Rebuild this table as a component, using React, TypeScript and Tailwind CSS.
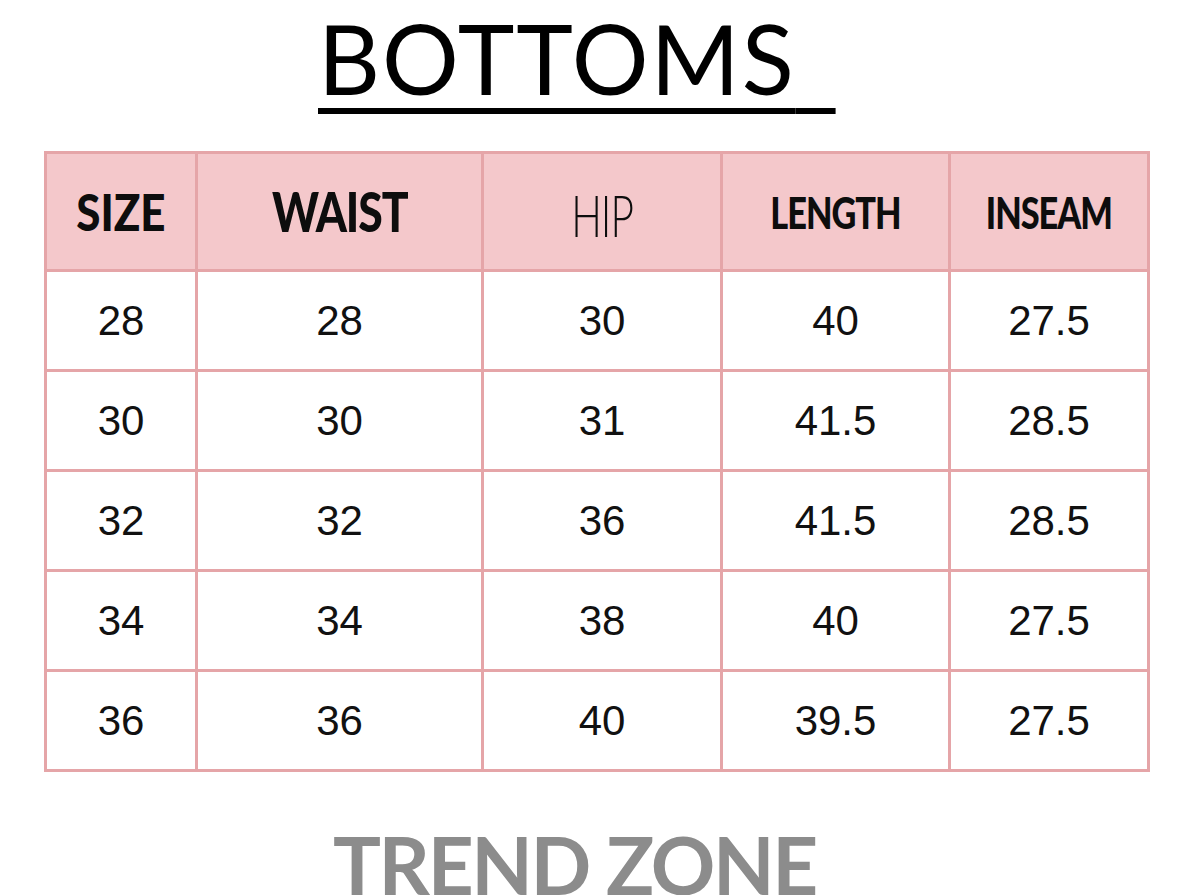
import React from "react";

const rows = [
  ["28", "28", "30", "40", "27.5"],
  ["30", "30", "31", "41.5", "28.5"],
  ["32", "32", "36", "41.5", "28.5"],
  ["34", "34", "38", "40", "27.5"],
  ["36", "36", "40", "39.5", "27.5"],
];

const colWidths = ["w-[151px]", "w-[286px]", "w-[239px]", "w-[228px]", "w-[199px]"];

export default function App() {
  return (
    <div className="w-[1179px] h-[895px] overflow-hidden bg-white flex flex-col">
      {/* Title */}
      <div className="h-[151px] shrink-0 pl-[318px]">
        <h1
          className="text-[96px] leading-[1.2] font-normal tracking-[0.02em] text-black underline decoration-[6px] underline-offset-[13px] whitespace-pre"
          style={{ fontFamily: "Lato, 'Liberation Sans', sans-serif" }}
        >
          BOTTOMS<span className="tracking-[0.16em]">{"\u00a0"}</span>
        </h1>
      </div>

      {/* Size table */}
      <div className="shrink-0 pl-[44px]">
        <table className="border-collapse table-fixed w-[1105px]">
          <colgroup>
            {colWidths.map((w, i) => (
              <col key={i} className={w} />
            ))}
          </colgroup>
          <thead>
            <tr className="h-[118px] bg-[#f4c8cb] text-[#0d0d0d]" style={{ fontFamily: "Lato, sans-serif" }}>
              <th className="border-[3px] border-[#e5a5a8] font-black text-[51px] leading-none align-middle">
                <span className="inline-block scale-x-[0.86]">SIZE</span>
              </th>
              <th className="border-[3px] border-[#e5a5a8] font-black text-[55px] leading-none align-middle">
                <span className="inline-block scale-x-[0.81] tracking-tight">WAIST</span>
              </th>
              <th className="border-[3px] border-[#e5a5a8] font-light text-[58px] leading-none align-middle">
                <span className="inline-block translate-y-[3px] scale-x-[0.7] tracking-tight">HIP</span>
              </th>
              <th className="border-[3px] border-[#e5a5a8] font-black text-[44px] leading-none align-middle">
                <span className="inline-block scale-x-[0.78] tracking-[-0.03em]">LENGTH</span>
              </th>
              <th className="border-[3px] border-[#e5a5a8] font-black text-[44px] leading-none align-middle">
                <span className="inline-block scale-x-[0.78] tracking-[-0.03em]">INSEAM</span>
              </th>
            </tr>
          </thead>
          <tbody style={{ fontFamily: "'Liberation Sans', Arial, sans-serif" }}>
            {rows.map((r, i) => (
              <tr key={i} className="h-[100px]">
                {r.map((v, j) => (
                  <td
                    key={j}
                    className="border-[3px] border-[#e5a5a8] text-center align-middle text-[42px] leading-none text-[#111]"
                  >
                    {v}
                  </td>
                ))}
              </tr>
            ))}
          </tbody>
        </table>
      </div>

      {/* Brand */}
      <div className="shrink-0 mt-[52px] pl-[333px]">
        <div
          className="text-[80px] leading-none font-bold text-[#8c8c8c] tracking-[-0.03em]"
          style={{ fontFamily: "Lato, 'Liberation Sans', sans-serif" }}
        >
          TREND ZONE
        </div>
      </div>
    </div>
  );
}
